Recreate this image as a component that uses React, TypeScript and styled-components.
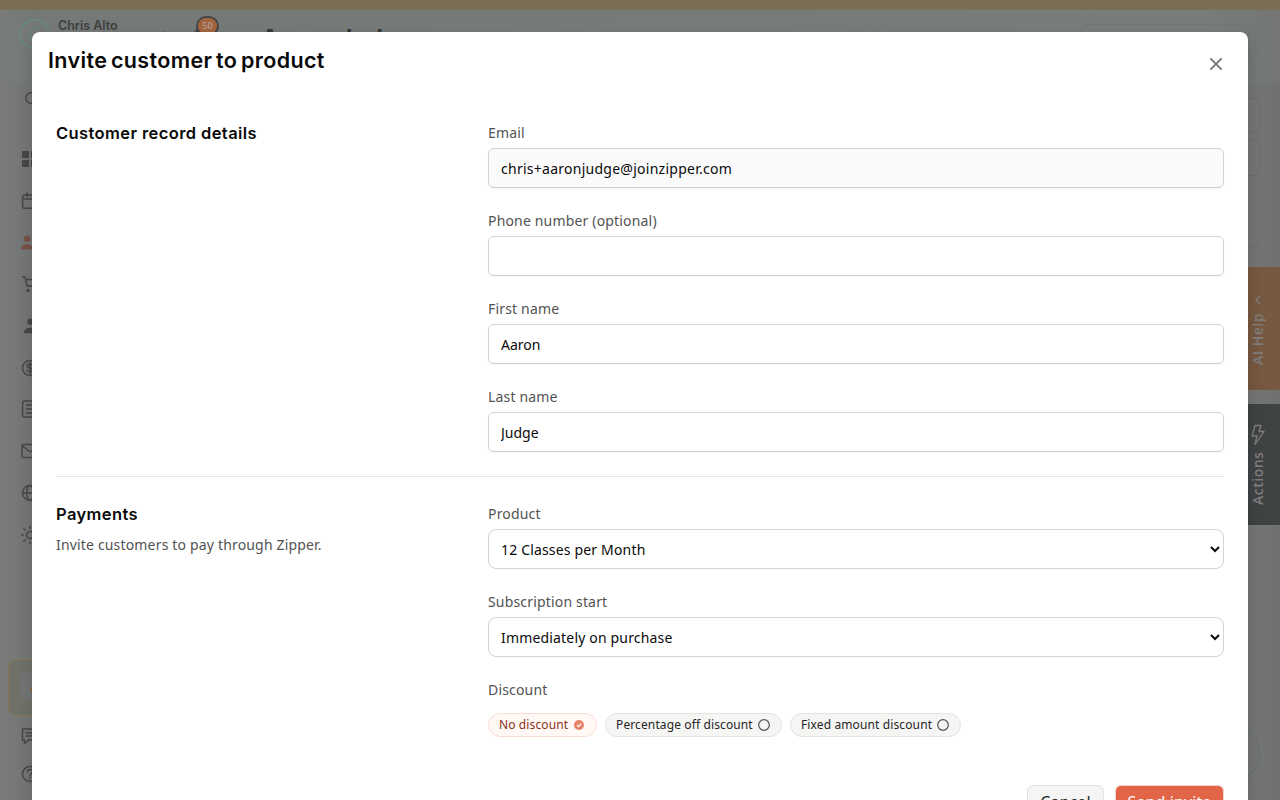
import React from "react";
import styled, { createGlobalStyle } from "styled-components";

const Global = createGlobalStyle`
  * { box-sizing: border-box; }
  html, body { margin: 0; height: 100%; overflow: hidden; }
  body { font-family: "Noto Sans", sans-serif; font-size: 14px; line-height: 20px; letter-spacing: 0.17px; color: #0a0a0a; }
  button, input, select { font: inherit; letter-spacing: inherit; color: inherit; margin: 0; }
`;

const Screen = styled.div`
  position: relative;
  width: 1280px;
  height: 800px;
  overflow: hidden;
  background: linear-gradient(90deg, #7a7d7c 0, #747776 20px, #727574 1240px, #747675 1256px, #6f7170 1280px);
`;

const Banner = styled.div`
  height: 10px;
  background: #7a6e57;
`;

const AppHeader = styled.header`
  display: flex;
  align-items: flex-start;
  height: 73px;
  padding: 9px 0 0 19px;
  background: linear-gradient(90deg, #797c7b, #747877 32px, #787c7b 1200px, #737675 100%);
`;

const Avatar = styled.svg`
  flex: none;
  width: 30px;
  height: 30px;
  fill: none;
  stroke: #658986;
`;

const UserName = styled.div`
  width: 102px;
  margin: -3px 0 0 9px;
  font: 600 12.5px/20px "Inter", sans-serif;
  letter-spacing: 0;
  color: #40403f;
`;

const Caret = styled.svg`
  width: 6px;
  height: 6px;
  margin: 12px 26px 0 0;
  fill: #40403f;
`;

const BellShape = styled.svg`
  flex: none;
  width: 16px;
  height: 16px;
  margin: 9px -14px 0 0;
  fill: #444746;
`;

const Badge = styled.div`
  position: relative;
  display: flex;
  width: 23px;
  height: 20px;
  margin: -3.5px 0 0 2px;
  align-items: center;
  justify-content: center;
  border: 2px solid #444746;
  border-radius: 10px;
  background: #a4633f;
  color: #b1a9a4;
  font-size: 9px;
  letter-spacing: 0;
`;

const PageTitle = styled.div`
  margin: 6px 0 0 42px;
  font: 700 24px/28px "Inter", sans-serif;
  color: #353636;
  white-space: nowrap;
`;

const HeaderAction = styled.div`
  width: 168px;
  height: 40px;
  margin: 5px 31px 0 auto;
  border: 1px solid #717473;
  border-radius: 8px;
`;

const Body = styled.div`
  display: flex;
  justify-content: space-between;
  height: 717px;
`;

const Sidebar = styled.nav`
  width: 220px;
  padding: 6px 0 0 21px;
`;

const NavItem = styled.div<{ $gap?: number; $tone?: string }>`
  display: flex;
  align-items: center;
  height: 18px;
  margin-top: ${(p) => p.$gap ?? 24}px;
  color: ${(p) => p.$tone ?? "#494646"};
  svg { display: block; }
`;

const Promo = styled.div`
  width: 190px;
  height: 57px;
  margin: 115px 0 0 -13px;
  padding: 13px 12px;
  border: 1px solid #84774f;
  border-radius: 8px;
  background: #70726a;
`;

const PromoIcon = styled.div`
  width: 34px;
  height: 28px;
  padding: 7px 8px;
  border-radius: 5px;
  background: #727574;
`;

const PageEdge = styled.div`
  width: 100px;
  padding-top: 15px;
`;

const Panel = styled.div<{ $h: number; $top?: number }>`
  width: 80px;
  height: ${(p) => p.$h}px;
  margin-top: ${(p) => p.$top ?? 0}px;
  border: 1px solid #6b6e6d;
  border-radius: 6px;
`;

const PageRule = styled.div`
  width: 80px;
  height: 1px;
  margin-top: 70px;
  background: #6b6e6d;
`;

const HelpBubble = styled.div`
  width: 56px;
  height: 56px;
  margin: 479px 0 0 24px;
  border: 1px solid #686b72;
  border-radius: 50%;
`;

const SideTab = styled.div<{ $top: number; $h: number; $bg: string }>`
  position: absolute;
  right: 0;
  top: ${(p) => p.$top}px;
  width: 44px;
  height: ${(p) => p.$h}px;
  display: flex;
  align-items: center;
  justify-content: center;
  gap: 6px;
  writing-mode: vertical-rl;
  transform: rotate(180deg);
  background: ${(p) => p.$bg};
  color: #7f7e7c;
  font: 600 14px/20px "Open Sans", sans-serif;
  letter-spacing: 0.5px;
  svg { transform: rotate(180deg); }
`;

const Modal = styled.section`
  position: absolute;
  left: 32px;
  top: 32px;
  width: 1216px;
  height: 820px;
  border-radius: 8px;
  background: #fff;
  box-shadow: 0 8px 16px rgba(0, 0, 0, 0.16);
`;

const ModalHeader = styled.div`
  display: flex;
  justify-content: space-between;
  height: 64px;
  padding: 12px 20px 0 16px;
`;

const Title = styled.h1`
  margin: 0;
  font: 600 21.5px/33px "Inter", sans-serif;
  letter-spacing: 0.35px;
  word-spacing: -2px;
`;

const Close = styled.button`
  display: flex;
  width: 24px;
  height: 24px;
  margin-top: 8px;
  padding: 0;
  align-items: center;
  justify-content: center;
  border: 0;
  background: none;
  color: #777;
`;

const Section = styled.div<{ $divided?: boolean }>`
  display: grid;
  grid-template-columns: 408px 736px;
  column-gap: 24px;
  margin: 0 24px;
  padding: ${(p) => (p.$divided ? "27px 0 0" : "27px 0 24px")};
  border-top: ${(p) => (p.$divided ? "1px solid #e5e5e5" : "0")};
`;

const SectionTitle = styled.h2`
  margin: -1px 0 0;
  font: 600 16.5px/22px "Inter", sans-serif;
  letter-spacing: 0.4px;
`;

const SectionText = styled.p`
  margin: 10px 0 0;
  color: #525252;
`;

const Fields = styled.div`
  display: flex;
  flex-direction: column;
  gap: 23px;
`;

const Field = styled.label`
  display: flex;
  flex-direction: column;
  gap: 5px;
  color: #525252;
`;

const Input = styled.input`
  width: 100%;
  height: 40px;
  padding: 1px 12px 0;
  border: 1px solid #d1d3d5;
  border-radius: 6px;
  background: #fff;
  box-shadow: 0 1px 2px rgba(0, 0, 0, 0.06);
  color: #0a0a0a;
  letter-spacing: 0;
  outline: 0;
  &:disabled { background: #fafafa; letter-spacing: 0.26px; }
`;

const Select = styled.select`
  width: 100%;
  height: 40px;
  padding: 1px 0 0 8px;
  border: 1px solid #d1d3d5;
  border-radius: 8px;
  background: #fff;
  color: #0a0a0a;
`;

const Chips = styled.div`
  display: flex;
  gap: 8px;
  margin-top: 8px;
`;

const Chip = styled.button<{ $on?: boolean; $w: number }>`
  display: flex;
  width: ${(p) => p.$w}px;
  height: 24px;
  padding: 0 11px 0 10px;
  align-items: center;
  justify-content: space-between;
  border: 1px solid ${(p) => (p.$on ? "#fbdcd5" : "#e3e3e1")};
  border-radius: 12px;
  background: ${(p) => (p.$on ? "#fff8f5" : "#f5f5f4")};
  color: ${(p) => (p.$on ? "#8a3420" : "#262626")};
  font-size: 12px;
  line-height: 16px;
  letter-spacing: 0.12px;
  white-space: nowrap;
`;

const Actions = styled.div`
  display: flex;
  justify-content: flex-end;
  gap: 12px;
  padding: 48px 24px 0;
`;

const Action = styled.button<{ $primary?: boolean }>`
  width: ${(p) => (p.$primary ? 109 : 77)}px;
  height: 34px;
  margin-right: ${(p) => (p.$primary ? 0 : -1)}px;
  padding: 0;
  border: 1px solid ${(p) => (p.$primary ? "#f0d5cd" : "#e3e3e1")};
  border-radius: 6px;
  background: ${(p) => (p.$primary ? "#e16546" : "#f5f5f4")};
  color: ${(p) => (p.$primary ? "#fff" : "#262626")};
  font-size: 16px;
  line-height: 24px;
  letter-spacing: 0.1px;
`;

const Line = ({ children, size = 18 }: { children: React.ReactNode; size?: number }) => (
  <svg width={size} height={size} viewBox="0 0 18 18" fill="none" stroke="currentColor" strokeWidth="1.5" strokeLinecap="round" strokeLinejoin="round">
    {children}
  </svg>
);

const Ring = () => (
  <svg width="12" height="12" viewBox="0 0 12 12" fill="none" stroke="#555" strokeWidth="1.2">
    <circle cx="6" cy="6" r="5.3" />
  </svg>
);

export default function App() {
  return (
    <Screen>
      <Global />
      <Banner />
      <AppHeader>
        <Avatar viewBox="0 0 30 30"><circle cx="15.5" cy="15" r="14.300" strokeWidth="1.600" /><path d="M21.500 11.300a6 6 0 1 0 0 8" stroke="#6b7f7d" strokeWidth="2" /></Avatar>
        <UserName>Chris Alto</UserName>
        <Caret viewBox="0 0 8 8"><path d="M4 0 0 5h8z" /></Caret>
        <BellShape viewBox="0 0 16 16"><path d="M8 0C4 0 2 3 2 6v5l-2 3h16l-2-3V6c0-3-2-6-6-6z" /></BellShape>
        <Badge>50</Badge>
        <PageTitle>Aaron Judge</PageTitle>
        <HeaderAction />
      </AppHeader>
      <Body>
        <Sidebar>
          <NavItem $gap={0}><Line><circle cx="10" cy="9" r="5.3" /><path d="m14 13 3 3" /></Line></NavItem>
          <NavItem $gap={43}>
            <svg width="18" height="18" viewBox="0 0 18 18" fill="currentColor"><rect x="1" y="1" width="7" height="7" rx=".8" /><rect x="10" y="1" width="7" height="7" rx=".8" /><rect x="1" y="10" width="7" height="7" rx=".8" /><rect x="10" y="10" width="7" height="7" rx=".8" /></svg>
          </NavItem>
          <NavItem><Line><rect x="1.6" y="3" width="15" height="13.3" rx="2" /><path d="M1.6 7h15M6 1v4M12 1v4" /></Line></NavItem>
          <NavItem $tone="#795148">
            <svg width="20" height="18" viewBox="0 0 20 18" fill="currentColor"><circle cx="6" cy="4.8" r="3.3" /><path d="M0 15.5C0 12 3 10.2 6 10.2S12 12 12 15.5zM10.8 7.700a3.300 3.300 0 1 0 0-6 5 5 0 0 1 0 6zM13.500 15.500H18c0-4-2-5.500-5.400-5.300 1 1 1.100 2.600.9 5.300z" /></svg>
          </NavItem>
          <NavItem $gap={23}><Line><path d="M1.500 2H4l2 9h9l1.500-6.500H5" /><circle cx="7" cy="15.500" r="1" /><circle cx="14" cy="15.500" r="1" /></Line></NavItem>
          <NavItem>
            <svg width="18" height="18" viewBox="0 0 18 18" fill="currentColor"><circle cx="9.500" cy="4.700" r="3.200" /><path d="M3 16.200C3 12.500 6 10.800 9.500 10.800s6.500 1.700 6.500 5.400z" /></svg>
          </NavItem>
          <NavItem><Line><circle cx="9" cy="9" r="7.500" /><path d="M9 3.500v11M12 6.300C11 5 6 4.800 6 7s6 1.800 6 4-5 2-6 .4" /></Line></NavItem>
          <NavItem $gap={23}><Line><rect x="1.600" y="1" width="15" height="16" rx="2" /><path d="M5.500 5h7M5.500 9h7M5.500 13h5" /></Line></NavItem>
          <NavItem><Line><rect x="1" y="2.500" width="16" height="13" rx="1.600" /><path d="m1.500 4 7.500 6 7.500-6" /></Line></NavItem>
          <NavItem><Line><circle cx="9" cy="9" r="7.500" /><ellipse cx="9" cy="9" rx="3.300" ry="7.500" /><path d="M1.500 9h15" /></Line></NavItem>
          <NavItem><Line><circle cx="9" cy="9" r="3.500" /><path d="M9 .3v1.900M9 15.800v1.900M.3 9h1.900M15.800 9h1.900M2.800 2.800l1.400 1.400M13.800 13.800l1.400 1.400M2.800 15.200l1.400-1.400M13.800 4.200l1.400-1.400" /></Line></NavItem>
          <Promo>
            <PromoIcon><svg width="12" height="12" viewBox="0 0 12 12" fill="#8b6135"><path d="m5 0-4 9h10L7 0z" /></svg></PromoIcon>
          </Promo>
          <NavItem $gap={11}><Line><path d="M1.500 2h15v11h-9l-4 3.500V13h-2zM5 6h8M5 9h6" /></Line></NavItem>
          <NavItem $gap={20}><Line><circle cx="9" cy="9" r="7.500" /><path d="M6.500 7c0-3.400 5-3.200 5-.3C11.500 8.500 9 8.800 9 11M9 13v.2" /></Line></NavItem>
        </Sidebar>
        <PageEdge>
          <Panel $h={34} />
          <Panel $h={36} $top={8} />
          <PageRule />
          <HelpBubble />
        </PageEdge>
      </Body>
      <SideTab $top={267} $h={123} $bg="#775840">
        AI Help
        <svg width="14" height="16" viewBox="0 0 14 16" fill="none" stroke="currentColor" strokeWidth="1.400"><path d="m9 4-4 4 4 4" /></svg>
      </SideTab>
      <SideTab $top={404} $h={121} $bg="#404343">
        Actions
        <svg width="16" height="22" viewBox="0 0 16 22" fill="none" stroke="currentColor" strokeWidth="1.300" strokeLinejoin="round"><path d="M5 1.500h6L9 7.500h5L5 20.500 7 12H2z" /></svg>
      </SideTab>
      <Modal>
        <ModalHeader>
          <Title>Invite customer to product</Title>
          <Close aria-label="Close"><svg width="14" height="14" viewBox="0 0 14 14" fill="none" stroke="currentColor" strokeWidth="2"><path d="m1.400 1.400 11.200 11.200M12.600 1.400 1.400 12.600" /></svg></Close>
        </ModalHeader>
        <Section>
          <SectionTitle>Customer record details</SectionTitle>
          <Fields>
            <Field>Email<Input disabled defaultValue="chris+aaronjudge@joinzipper.com" /></Field>
            <Field>Phone number (optional)<Input /></Field>
            <Field>First name<Input defaultValue="Aaron" /></Field>
            <Field>Last name<Input defaultValue="Judge" /></Field>
          </Fields>
        </Section>
        <Section $divided>
          <div>
            <SectionTitle>Payments</SectionTitle>
            <SectionText>Invite customers to pay through Zipper.</SectionText>
          </div>
          <Fields>
            <Field>Product<Select><option>12 Classes per Month</option></Select></Field>
            <Field>Subscription start<Select><option>Immediately on purchase</option></Select></Field>
            <Field as="div">
              Discount
              <Chips>
                <Chip $on $w={109}>No discount
                  <svg width="12" height="12" viewBox="0 0 12 12"><circle cx="6" cy="6" r="5" fill="#e78268" /><path d="m4 6.200 1.400 1.400L8.200 4.700" fill="none" stroke="#fff" strokeWidth="1.200" /></svg>
                </Chip>
                <Chip $w={177}>Percentage off discount<Ring /></Chip>
                <Chip $w={171}>Fixed amount discount<Ring /></Chip>
              </Chips>
            </Field>
          </Fields>
        </Section>
        <Actions>
          <Action>Cancel</Action>
          <Action $primary>Send invite</Action>
        </Actions>
      </Modal>
    </Screen>
  );
}
